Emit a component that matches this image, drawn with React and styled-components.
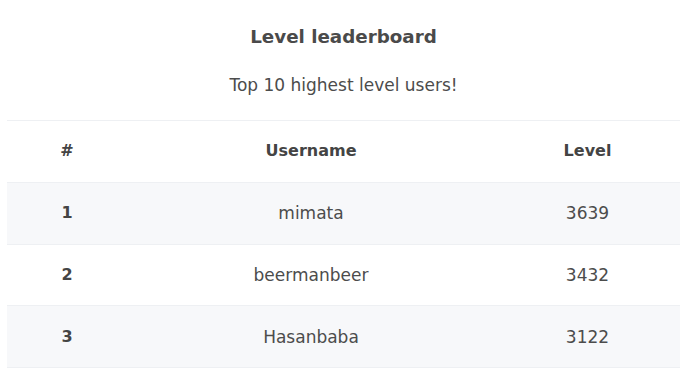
import React from "react";
import styled, { createGlobalStyle } from "styled-components";

const Global = createGlobalStyle`
  html, body { margin: 0; padding: 0; background: #fff; }
  body { font-family: "DejaVu Sans", "Open Sans", sans-serif; color: #4a4a4a; }
`;

const Page = styled.div`
  padding: 0 20px 0 7px;
`;

const Header = styled.header`
  display: flex;
  flex-direction: column;
  align-items: center;
  padding-top: 23px;
  padding-bottom: 23px;
`;

const Title = styled.h2`
  margin: 0;
  font-size: 18.3px;
  font-weight: 600;
  line-height: 27px;
  color: #4a4a4a;
`;

const Subtitle = styled.p`
  margin: 23px 0 0;
  font-size: 17px;
  font-weight: 400;
  line-height: 24px;
  color: #4c4c4c;
`;

const Table = styled.table`
  width: 673px;
  border-collapse: collapse;
  table-layout: fixed;
  border-bottom: 1px solid #eef0f3;
`;

const Row = styled.tr`
  background: ${(p) => (p.$striped ? "#f7f8fa" : "#fff")};
  border-top: 1px solid #eef0f3;
`;

const Cell = styled.td`
  height: 60.75px;
  padding: 0;
  text-align: center;
  vertical-align: middle;
  font-size: ${(p) => (p.$bold ? "16px" : "17px")};
  line-height: 24px;
  font-weight: ${(p) => (p.$bold ? 600 : 400)};
  color: ${(p) => (p.$bold ? "#444" : "#4c4c4c")};
`;

const HeadCell = styled.th`
  height: 60.75px;
  padding: 0;
  text-align: center;
  vertical-align: middle;
  font-size: 16px;
  line-height: 24px;
  font-weight: 600;
  color: #444;
`;

const rows = [
  { rank: 1, name: "mimata", level: 3639 },
  { rank: 2, name: "beermanbeer", level: 3432 },
  { rank: 3, name: "Hasanbaba", level: 3122 },
];

export default function App() {
  return (
    <>
      <Global />
      <Page>
        <Header>
          <Title>Level leaderboard</Title>
          <Subtitle>Top 10 highest level users!</Subtitle>
        </Header>
        <Table>
          <colgroup>
            <col style={{ width: 120 }} />
            <col style={{ width: 368 }} />
            <col style={{ width: 185 }} />
          </colgroup>
          <thead>
            <Row>
              <HeadCell>#</HeadCell>
              <HeadCell>Username</HeadCell>
              <HeadCell>Level</HeadCell>
            </Row>
          </thead>
          <tbody>
            {rows.map((r, i) => (
              <Row key={r.rank} $striped={i % 2 === 0}>
                <Cell $bold>{r.rank}</Cell>
                <Cell>{r.name}</Cell>
                <Cell>{r.level}</Cell>
              </Row>
            ))}
          </tbody>
        </Table>
      </Page>
    </>
  );
}
